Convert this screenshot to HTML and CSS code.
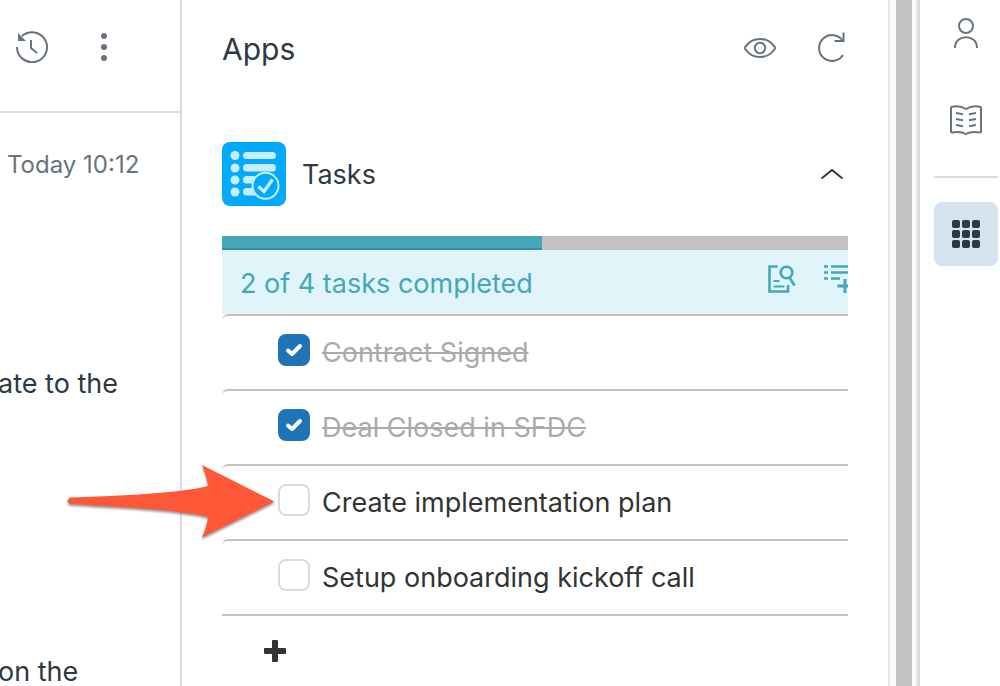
FILE: index.html
```html
<!DOCTYPE html>
<html lang="en">

<head>
  <meta charset="UTF-8" />
  <meta name="viewport" content="width=device-width, initial-scale=1.0" />
  <title>Tasks</title>
  <link rel="stylesheet" href="styles.css">
</head>

<body>
  <div class="layout">
    <section class="ticket">
      <header class="ticket-header">
        <button class="icon-btn" aria-label="History">
          <svg width="32" height="32" viewBox="0 0 32 32" fill="none" stroke="currentColor" stroke-width="2">
            <path d="M1 16A15 15 0 1 0 6 5" />
            <path d="M15 9v8l6 5" />
            <path d="M2 2v8h8z" fill="currentColor" stroke="none" />
          </svg>
        </button>
        <button class="icon-btn" aria-label="More">
          <svg width="32" height="32" viewBox="0 0 32 32" fill="currentColor">
            <circle cx="16" cy="5" r="3" />
            <circle cx="16" cy="16" r="3" />
            <circle cx="16" cy="27" r="3" />
          </svg>
        </button>
      </header>
      <div class="ticket-body">
        <time class="time">Today 10:12</time>
        <p class="message">ate to the</p>
        <p class="message">on the</p>
      </div>
    </section>

    <main class="apps">
      <header class="apps-header">
        <h1>Apps</h1>
        <button class="icon-btn" aria-label="Show">
          <svg width="32" height="32" viewBox="0 0 32 32" fill="none" stroke="currentColor" stroke-width="2">
            <path d="M1.400 14.800C5 9.500 10 7 16 7s11 2.500 14.600 7.800q.800 1.200 0 2.400C27 22.500 22 25 16 25S5 22.500 1.400 17.200q-.800-1.200 0-2.400z" />
            <circle cx="16" cy="16" r="5.200" />
          </svg>
        </button>
        <button class="icon-btn" aria-label="Reload">
          <svg width="32" height="32" viewBox="0 0 32 32" fill="none" stroke="currentColor" stroke-width="2">
            <path d="M27 23A13 13 0 1 1 27 9" />
            <path d="M27.500 0.500v8.500h-9" />
          </svg>
        </button>
      </header>

      <section class="app">
        <div class="app-title">
          <svg width="64" height="64" viewBox="0 0 64 64">
            <rect width="64" height="64" rx="8" fill="#03a9fa" />
            <g fill="#c5edff">
              <circle cx="13" cy="13.500" r="4.500" />
              <circle cx="13" cy="26" r="4.500" />
              <circle cx="13" cy="38" r="4.500" />
              <circle cx="13" cy="50" r="4.500" />
              <rect x="21" y="10" width="33" height="7" rx="3.500" />
              <rect x="21" y="22" width="33" height="7.500" rx="3.500" />
              <rect x="21" y="34" width="20" height="7.500" rx="3.500" />
              <rect x="21" y="46" width="20" height="7.500" rx="3.500" />
            </g>
            <circle cx="43.500" cy="43.800" r="13" fill="#03a9fa" stroke="#c5edff" stroke-width="2" />
            <path d="M36.500 44.500l5.500 5 8.500-12" fill="none" stroke="#c5edff" stroke-width="3.500" />
          </svg>
          <h2>Tasks</h2>
          <button class="icon-btn dark" aria-label="Collapse">
            <svg width="32" height="32" viewBox="0 0 32 32" fill="none" stroke="currentColor" stroke-width="2">
              <path d="M5.500 20.500L16 12l10.500 8.500" />
            </svg>
          </button>
        </div>

        <div class="progress">
          <div class="progress-bar" style="width: 51.1%"></div>
        </div>
        <div class="summary">
          <p>2 of 4 tasks completed</p>
          <button class="tool" aria-label="Templates">
            <svg width="30" height="30" viewBox="0 0 30 30" fill="none" stroke="currentColor">
              <path d="M11.500 2.500h-8v25h18.500V21" stroke-width="2.600" />
              <circle cx="20.500" cy="8.500" r="5.800" stroke-width="2.600" />
              <path d="M23.500 13.500l5 8" stroke-width="2.600" />
              <path d="M7.500 17h6M7.500 22.500h11" stroke-width="2.200" />
            </svg>
          </button>
          <button class="tool" aria-label="Add tasks">
            <svg width="30" height="30" viewBox="0 0 30 30" fill="none" stroke="currentColor">
              <path d="M2 2.500h4M2 8.500h4M2 14.500h4M9 2.500h18M9 8.500h18M9 14.500h9" stroke-width="2.400" />
              <path d="M23 15v14M15.500 22h14" stroke-width="3" />
            </svg>
          </button>
        </div>

        <ul class="tasks">
          <li class="task">
            <span class="check">
              <input type="checkbox" id="task-1" checked>
              <svg viewBox="0 0 32 32"><path d="M10 16.500l4 3.500 8-8" /></svg>
            </span>
            <label for="task-1">Contract Signed</label>
          </li>
          <li class="task">
            <span class="check">
              <input type="checkbox" id="task-2" checked>
              <svg viewBox="0 0 32 32"><path d="M10 16.500l4 3.500 8-8" /></svg>
            </span>
            <label for="task-2">Deal Closed in SFDC</label>
          </li>
          <li class="task">
            <span class="check">
              <input type="checkbox" id="task-3">
            </span>
            <label for="task-3">Create implementation plan</label>
            <svg class="arrow" width="216" height="84" viewBox="0 0 216 84">
              <path d="M9 37.500C60 36 120 33 147 26Q146 17 141 5L213.500 41.500 141 77.500Q146 66 147 57C120 50 60 47 9 44Q4 41 9 37.500z" />
            </svg>
          </li>
          <li class="task">
            <span class="check">
              <input type="checkbox" id="task-4">
            </span>
            <label for="task-4">Setup onboarding kickoff call</label>
          </li>
        </ul>
        <button class="add" aria-label="Add a task">
          <svg width="24" height="24" viewBox="0 0 24 24" fill="currentColor">
            <rect x="9" y="1" width="6" height="22" rx="1" />
            <rect x="1" y="9" width="22" height="6" rx="1" />
          </svg>
        </button>
      </section>
    </main>

    <div class="scrollbar">
      <div class="thumb"></div>
    </div>

    <nav class="rail">
      <button class="rail-btn" aria-label="User">
        <svg width="32" height="32" viewBox="0 0 32 32" fill="none" stroke="currentColor" stroke-width="2">
          <circle cx="16" cy="10" r="7" />
          <path d="M5 32C5 17.500 27 17.500 27 32" />
        </svg>
      </button>
      <button class="rail-btn" aria-label="Knowledge">
        <svg width="32" height="32" viewBox="0 -1 32 32" fill="none" stroke="currentColor" stroke-width="2">
          <path d="M1 3q0-1 1-1.200Q10 0 16 4q6-4 14-2.200 1 .200 1 1.200v23.500q0 1-1 .900-9-1.500-14 1.600-5-3.100-14-1.600-1 .100-1-.900z" />
          <path d="M6 8l7 1.200M6 14l7 1.200M6 20l7 1.200M26 8l-7 1.200M26 14l-7 1.200M26 20l-7 1.200" />
        </svg>
      </button>
      <hr>
      <button class="rail-btn active" aria-label="Apps">
        <svg width="32" height="32" viewBox="0 0 32 32" fill="currentColor">
          <rect x="2" y="2" width="8" height="8" rx="2" />
          <rect x="12" y="2" width="8" height="8" rx="2" />
          <rect x="22" y="2" width="8" height="8" rx="2" />
          <rect x="2" y="12" width="8" height="8" rx="2" />
          <rect x="12" y="12" width="8" height="8" rx="2" />
          <rect x="22" y="12" width="8" height="8" rx="2" />
          <rect x="2" y="22" width="8" height="8" rx="2" />
          <rect x="12" y="22" width="8" height="8" rx="2" />
          <rect x="22" y="22" width="8" height="8" rx="2" />
        </svg>
      </button>
    </nav>
  </div>
</body>

</html>
```
FILE: styles.css
```css
* {
  box-sizing: border-box;
}

body {
  margin: 0;
  background-color: #fff;
  font-family: Inter, "Liberation Sans", sans-serif;
  font-size: 27px;
  line-height: 34px;
  color: #2f3941;
}

h1,
h2,
p,
ul {
  margin: 0;
  padding: 0;
  font-size: inherit;
  font-weight: 400;
}

button {
  padding: 0;
  border: 0;
  background: none;
  color: #68737d;
}

svg {
  display: block;
}

.layout {
  display: grid;
  grid-template-columns: 182px 1fr 32px 80px;
  min-height: 100vh;
}

/* ticket */
.ticket {
  border-right: 2px solid #d8dcde;
}

.ticket-header {
  display: flex;
  gap: 40px;
  height: 113px;
  padding: 31px 16px;
  border-bottom: 2px solid #d8dcde;
}

.icon-btn {
  width: 32px;
  height: 32px;
}

.icon-btn.dark {
  color: #2f3941;
}

.time {
  display: block;
  padding: 35px 7px 0;
  font-size: 24px;
  color: #68737d;
}

.message {
  margin: 185px 0 0 -2px;
  white-space: nowrap;
}

.message + .message {
  margin-top: 254px;
}

/* apps */
.apps {
  padding: 32px 40px 0;
}

.apps-header {
  display: flex;
  gap: 40px;
}

.apps-header h1 {
  flex: 1;
  font-size: 30px;
}

.app {
  margin-top: 76px;
}

.app-title {
  display: flex;
  align-items: center;
  gap: 16px;
}

.app-title h2 {
  flex: 1;
  padding-top: 2px;
}

.progress {
  height: 14px;
  margin-top: 30px;
  background-color: #c2c2c2;
}

.progress-bar {
  height: 100%;
  background-color: #42a8ba;
  border-bottom: 2px solid #3a8f9f;
}

.summary {
  display: flex;
  align-items: center;
  gap: 26px;
  height: 64px;
  padding-left: 18px;
  background-color: #e0f4fa;
  color: #42a8ba;
  overflow: hidden;
}

.summary p {
  flex: 1;
  padding-top: 4px;
}

.tool {
  flex: none;
  height: 40px;
  margin-top: -6px;
  color: #42a8ba;
}

.tool:last-child {
  margin-right: -4px;
}

.tasks {
  list-style: none;
  border-bottom: 2px solid #c2c2c2;
}

.task {
  position: relative;
  display: flex;
  gap: 12px;
  height: 75px;
  padding: 18px 0 0 56px;
  border-top: 2px solid #c2c2c2;
  border-top-left-radius: 6px;
  color: #333;
}

.task label {
  padding-top: 2px;
}

.check {
  display: grid;
  width: 32px;
  height: 32px;
}

.check > * {
  grid-area: 1 / 1;
}

.check input {
  appearance: none;
  width: 32px;
  height: 32px;
  margin: 0;
  border: 2px solid #d8dcde;
  border-radius: 8px;
  background-color: #fff;
}

.check input:checked {
  border-color: #1f73b7;
  background-color: #1f73b7;
}

.check svg {
  fill: none;
  stroke: #fff;
  stroke-width: 4;
  stroke-linecap: round;
  stroke-linejoin: round;
  pointer-events: none;
}

.check:has(:checked) + label {
  color: #aaa;
  text-decoration: line-through;
  text-decoration-thickness: 2px;
}

.arrow {
  position: absolute;
  top: -6px;
  left: -161px;
  fill: #ff5839;
  filter: drop-shadow(0 2px 1px rgba(0, 0, 0, 0.4));
}

.add {
  margin: 23px 0 0 41px;
  color: #333;
}

/* scrollbar */
.scrollbar {
  padding-left: 6px;
  background-color: #fafafa;
  border-left: 2px solid #e8e8e8;
  border-right: 2px solid #d8dcde;
  box-shadow: inset -2px 0 #e8e8e8;
}

.thumb {
  width: 16px;
  height: 100%;
  background-color: #c2c2c2;
}

/* rail */
.rail {
  display: flex;
  flex-direction: column;
  gap: 24px;
  padding: 0 2px 0 14px;
}

.rail-btn {
  display: grid;
  place-items: center;
  height: 64px;
  border-radius: 8px;
}

.rail-btn.active {
  background-color: #d5e2ef;
  color: #2f3941;
}

.rail hr {
  width: 100%;
  margin: 0;
  border: 0;
  border-top: 2px solid #d8dcde;
}
```
